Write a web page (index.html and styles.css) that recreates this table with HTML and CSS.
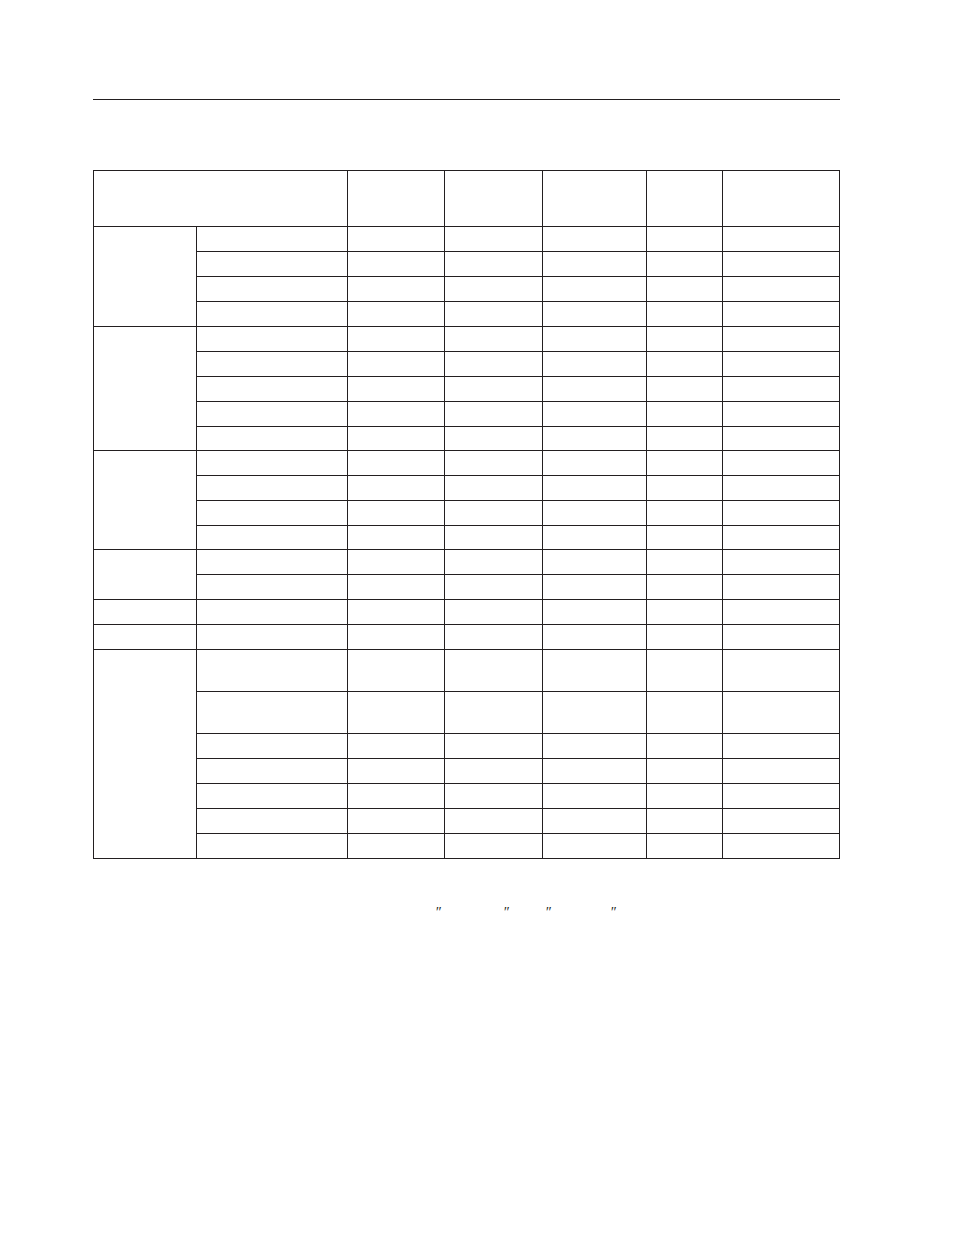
FILE: index.html
```html
<!DOCTYPE html>
<html>
<head>
<meta charset="utf-8">
<link rel="stylesheet" href="styles.css">
</head>
<body>
<div class="page">
  <div class="rule"></div>
  <div class="grid">
    <div class="c head-span"></div><div class="c"></div><div class="c"></div><div class="c"></div><div class="c"></div><div class="c"></div>

    <div class="c g4"></div><div class="c"></div><div class="c"></div><div class="c"></div><div class="c"></div><div class="c"></div><div class="c"></div>
    <div class="c"></div><div class="c"></div><div class="c"></div><div class="c"></div><div class="c"></div><div class="c"></div>
    <div class="c"></div><div class="c"></div><div class="c"></div><div class="c"></div><div class="c"></div><div class="c"></div>
    <div class="c"></div><div class="c"></div><div class="c"></div><div class="c"></div><div class="c"></div><div class="c"></div>

    <div class="c g5"></div><div class="c"></div><div class="c"></div><div class="c"></div><div class="c"></div><div class="c"></div><div class="c"></div>
    <div class="c"></div><div class="c"></div><div class="c"></div><div class="c"></div><div class="c"></div><div class="c"></div>
    <div class="c"></div><div class="c"></div><div class="c"></div><div class="c"></div><div class="c"></div><div class="c"></div>
    <div class="c"></div><div class="c"></div><div class="c"></div><div class="c"></div><div class="c"></div><div class="c"></div>
    <div class="c"></div><div class="c"></div><div class="c"></div><div class="c"></div><div class="c"></div><div class="c"></div>

    <div class="c g4"></div><div class="c"></div><div class="c"></div><div class="c"></div><div class="c"></div><div class="c"></div><div class="c"></div>
    <div class="c"></div><div class="c"></div><div class="c"></div><div class="c"></div><div class="c"></div><div class="c"></div>
    <div class="c"></div><div class="c"></div><div class="c"></div><div class="c"></div><div class="c"></div><div class="c"></div>
    <div class="c"></div><div class="c"></div><div class="c"></div><div class="c"></div><div class="c"></div><div class="c"></div>

    <div class="c g2"></div><div class="c"></div><div class="c"></div><div class="c"></div><div class="c"></div><div class="c"></div><div class="c"></div>
    <div class="c"></div><div class="c"></div><div class="c"></div><div class="c"></div><div class="c"></div><div class="c"></div>

    <div class="c"></div><div class="c"></div><div class="c"></div><div class="c"></div><div class="c"></div><div class="c"></div><div class="c"></div>

    <div class="c"></div><div class="c"></div><div class="c"></div><div class="c"></div><div class="c"></div><div class="c"></div><div class="c"></div>

    <div class="c g7"></div><div class="c"></div><div class="c"></div><div class="c"></div><div class="c"></div><div class="c"></div><div class="c"></div>
    <div class="c"></div><div class="c"></div><div class="c"></div><div class="c"></div><div class="c"></div><div class="c"></div>
    <div class="c"></div><div class="c"></div><div class="c"></div><div class="c"></div><div class="c"></div><div class="c"></div>
    <div class="c"></div><div class="c"></div><div class="c"></div><div class="c"></div><div class="c"></div><div class="c"></div>
    <div class="c"></div><div class="c"></div><div class="c"></div><div class="c"></div><div class="c"></div><div class="c"></div>
    <div class="c"></div><div class="c"></div><div class="c"></div><div class="c"></div><div class="c"></div><div class="c"></div>
    <div class="c"></div><div class="c"></div><div class="c"></div><div class="c"></div><div class="c"></div><div class="c"></div>
  </div>
  <div class="note"><span class="m m1">″</span><span class="m m2">″</span><span class="m m3">″</span><span class="m m4">″</span></div>
</div>
</body>
</html>
```
FILE: styles.css
```css
html, body {
  margin: 0;
  padding: 0;
  background: #ffffff;
}
.page {
  width: 954px;
  height: 1235px;
  padding-top: 99px;
  box-sizing: border-box;
  font-family: "Liberation Serif", serif;
  color: #231f20;
}
.rule {
  margin-left: 93px;
  width: 747px;
  height: 1px;
  background: #231f20;
}
.grid {
  margin-top: 70px;
  margin-left: 93px;
  width: 747px;
  box-sizing: border-box;
  border-left: 1px solid #231f20;
  border-top: 1px solid #231f20;
  display: grid;
  grid-template-columns: 103px 151px 97px 98px 104px 76px 117px;
  grid-template-rows: 56px 25px 25px 25px 25px 25px 25px 25px 25px 24px 25px 25px 25px 24px 25px 25px 25px 25px 42px 42px 25px 25px 25px 25px 25px;
}
.c {
  box-sizing: border-box;
  border-right: 1px solid #231f20;
  border-bottom: 1px solid #231f20;
}
.head-span { grid-column: span 2; }
.g2 { grid-row: span 2; }
.g4 { grid-row: span 4; }
.g5 { grid-row: span 5; }
.g7 { grid-row: span 7; }
.note {
  margin-top: 46px;
  height: 16px;
  line-height: 16px;
  font-size: 14px;
  font-style: italic;
  white-space: nowrap;
}
.m {
  display: inline-block;
  width: 5px;
  color: #231f20;
}
.m1 { margin-left: 435px; }
.m2 { margin-left: 63px; }
.m3 { margin-left: 37px; }
.m4 { margin-left: 60px; }
```
